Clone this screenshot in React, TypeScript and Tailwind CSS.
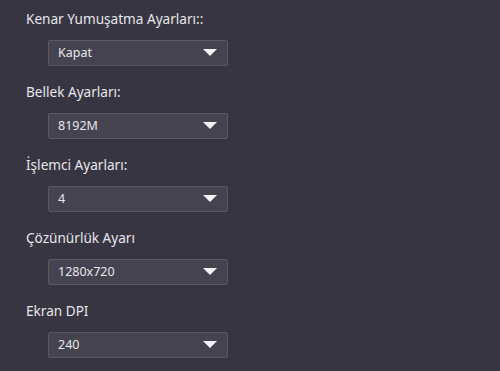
const fields = [
  { label: "Kenar Yumuşatma Ayarları::", value: "Kapat" },
  { label: "Bellek Ayarları:", value: "8192M" },
  { label: "İşlemci Ayarları:", value: "4" },
  { label: "Çözünürlük Ayarı", value: "1280x720" },
  { label: "Ekran DPI", value: "240" },
];

export default function App() {
  return (
    <div
      className="w-[500px] h-[371px] bg-[#373541] pl-[26px] pt-[10px] text-[#e6e6ea]"
      style={{ fontFamily: '"Noto Sans", sans-serif' }}
    >
      <div className="flex flex-col gap-[17px]">
        {fields.map((f) => (
          <div key={f.label} className="flex flex-col">
            <div className="text-[13.6px] leading-[18px]">{f.label}</div>
            <div className="mt-[12px] ml-[22px] w-[180px] h-[26px] flex items-center justify-between pl-[9px] pr-[10px] bg-[#45434f] border border-[#5a5866] rounded-[2px]">
              <span className="text-[12.5px]">{f.value}</span>
              <svg width="14" height="8" viewBox="0 0 14 8">
                <polygon points="0,0 14,0 7,7" fill="#f2f2f4" />
              </svg>
            </div>
          </div>
        ))}
      </div>
    </div>
  );
}
